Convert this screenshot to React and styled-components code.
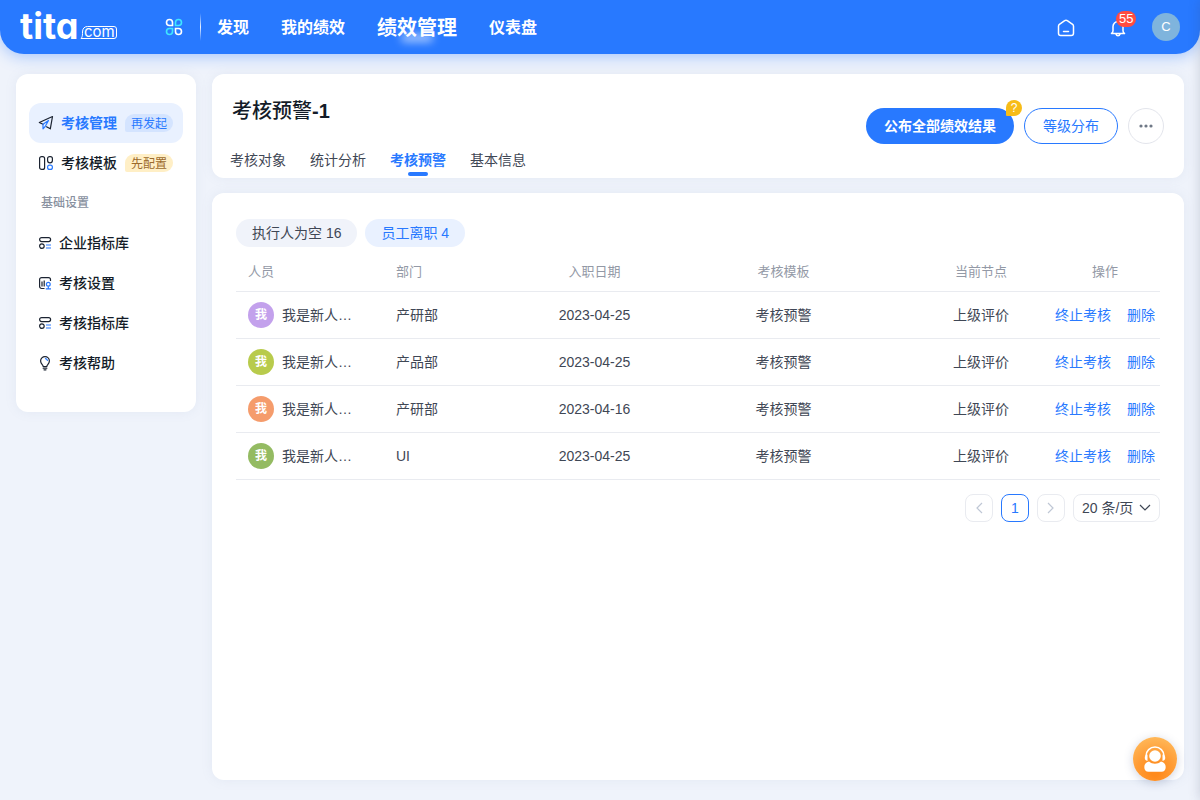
import React from "react";
import styled, { createGlobalStyle, css } from "styled-components";

const BLUE = "#2879ff";

const GlobalStyle = createGlobalStyle`
  *, *::before, *::after { box-sizing: border-box; }
  body {
    margin: 0;
    background: #eff3fb;
    color: #3f4755;
    font: 400 14px/20px "Liberation Sans", "Noto Sans CJK SC", sans-serif;
  }
  button, select { font: inherit; color: inherit; }
  button { cursor: pointer; padding: 0; border: 0; background: none; }
  a { color: inherit; text-decoration: none; }
  svg { display: block; flex: none; }
`;

const Page = styled.div`
  min-height: 100vh;
  display: flex;
  flex-direction: column;
`;

/* ---------- top bar ---------- */

const TopBar = styled.header`
  height: 54px;
  padding: 0 20px;
  display: flex;
  align-items: center;
  background: ${BLUE};
  border-radius: 0 0 24px 24px;
  box-shadow: 0 2px 16px rgba(40, 121, 255, 0.4);
  color: #fff;
`;

const LogoLink = styled.a`
  margin-right: 46px;
`;

const AppsButton = styled.button`
  margin-right: 17px;
`;

const Divider = styled.span`
  width: 1px;
  height: 28px;
  margin-right: 16px;
  background: linear-gradient(rgba(255, 255, 255, 0), rgba(255, 255, 255, 0.9), rgba(255, 255, 255, 0));
`;

const Nav = styled.nav`
  display: flex;
  align-items: center;
  gap: 32px;
  padding-top: 2px;
`;

const NavLink = styled.a`
  position: relative;
  font-size: 16px;
  line-height: 28px;
  font-weight: 700;
  ${(p) =>
    p.$active &&
    css`
      font-size: 20px;
      &::after {
        content: "";
        position: absolute;
        left: 24px;
        right: 24px;
        bottom: 0;
        height: 8px;
        border-radius: 4px;
        background: rgba(255, 255, 255, 0.6);
        filter: blur(4px);
      }
    `}
`;

const TopActions = styled.div`
  margin-left: auto;
  display: flex;
  align-items: center;
  gap: 24px;
`;

const IconButton = styled.button`
  position: relative;
  width: 28px;
  height: 28px;
  padding-top: 2px;
  display: grid;
  place-items: center;
`;

const Count = styled.span`
  position: absolute;
  top: -2px;
  left: 12px;
  padding: 0 3px;
  border-radius: 8px;
  background: #ff4c41;
  font-size: 13px;
  line-height: 16px;
`;

const UserButton = styled.button`
  width: 28px;
  height: 28px;
  margin-left: -4px;
  border-radius: 50%;
  background: #7fb4dd;
  color: #fff;
  font-size: 13px;
`;

/* ---------- body ---------- */

const Body = styled.div`
  flex: 1;
  display: flex;
  align-items: stretch;
  gap: 16px;
  padding: 20px 16px;
`;

const card = css`
  background: #fff;
  border-radius: 12px;
  box-shadow: 0 0 12px rgba(127, 145, 180, 0.1);
`;

const Sidebar = styled.aside`
  ${card}
  flex: none;
  align-self: flex-start;
  width: 180px;
  padding: 29px 13px;
`;

const SideLink = styled.a`
  height: 40px;
  padding: 0 9px;
  display: flex;
  align-items: center;
  gap: 7px;
  border-radius: 12px;
  color: ${(p) => (p.$active ? BLUE : "#141c28")};
  background: ${(p) => (p.$active ? "#e9f1ff" : "transparent")};
  font-weight: ${(p) => (p.$active ? 700 : 500)};
`;

const SideHeading = styled.h2`
  margin: 0;
  padding: 0 12px;
  font-size: 12px;
  line-height: 40px;
  font-weight: 500;
  color: #89919f;
`;

const Tag = styled.span`
  height: 18px;
  margin-left: 1px;
  padding: 0 6px;
  border-radius: 9px 9px 9px 2px;
  font-size: 12px;
  line-height: 20px;
  font-weight: 400;
  color: ${(p) => (p.$warm ? "#9c6a2c" : BLUE)};
  background: ${(p) => (p.$warm ? "#ffefc6" : "#d4e4ff")};
`;

const Main = styled.main`
  flex: 1;
  min-width: 0;
  display: flex;
  flex-direction: column;
  gap: 15px;
`;

const PlanHeader = styled.section`
  ${card}
  display: flex;
  justify-content: space-between;
  align-items: center;
  padding: 0 20px 0 18px;
`;

const PlanInfo = styled.div`
  padding-top: 23px;
`;

const Title = styled.h1`
  margin: 0 0 25px 2px;
  font-size: 20px;
  line-height: 28px;
  font-weight: 500;
  color: #141c28;
`;

const Tabs = styled.nav`
  display: flex;
  gap: 24px;
`;

const Tab = styled.a`
  position: relative;
  padding-bottom: 8px;
  ${(p) =>
    p.$active &&
    css`
      color: ${BLUE};
      font-weight: 700;
      &::after {
        content: "";
        position: absolute;
        left: 18px;
        right: 18px;
        bottom: 2px;
        height: 4px;
        border-radius: 2px;
        background: ${BLUE};
      }
    `}
`;

const PlanActions = styled.div`
  display: flex;
  gap: 10px;
`;

const PillButton = styled.button`
  position: relative;
  height: 36px;
  padding: 0 18px;
  border: ${(p) => (p.$primary ? "0" : `1px solid ${BLUE}`)};
  border-radius: 18px;
  color: ${(p) => (p.$primary ? "#fff" : BLUE)};
  background: ${(p) => (p.$primary ? BLUE : "#fff")};
  font-weight: ${(p) => (p.$primary ? 700 : 400)};
`;

const Hint = styled.span`
  position: absolute;
  top: -8px;
  right: -8px;
  width: 16px;
  height: 16px;
  border-radius: 8px 8px 8px 1px;
  background: #f7bc18;
  font-size: 12px;
  line-height: 16px;
  font-weight: 400;
`;

const MoreButton = styled.button`
  width: 36px;
  height: 36px;
  display: grid;
  place-items: center;
  border: 1px solid #e3e5ec;
  border-radius: 50%;
`;

const Content = styled.section`
  ${card}
  flex: 1;
  padding: 26px 24px;
`;

const Filters = styled.div`
  display: flex;
  gap: 8px;
  margin-bottom: 4px;
`;

const FilterPill = styled.button`
  height: 28px;
  padding: 0 16px;
  border-radius: 14px;
  color: ${(p) => (p.$active ? BLUE : "#3f4755")};
  background: ${(p) => (p.$active ? "#e9f1ff" : "#f0f3fa")};
`;

const Table = styled.table`
  width: 100%;
  table-layout: fixed;
  border-collapse: separate;
  border-spacing: 0;
`;

const HeadCell = styled.th`
  width: ${(p) => p.$width}px;
  height: 41px;
  padding: 2px ${(p) => (p.$left ? 12 : 0)}px 0;
  border-bottom: 1px solid #e9ebf0;
  text-align: ${(p) => (p.$left ? "left" : "center")};
  font-size: 13px;
  font-weight: 400;
  color: #9399a6;
`;

const Cell = styled.td`
  height: 47px;
  padding: 0 ${(p) => (p.$left ? 12 : 0)}px;
  border-bottom: 1px solid #e9ebf0;
  text-align: ${(p) => (p.$left ? "left" : "center")};
  white-space: nowrap;
`;

const Person = styled.div`
  display: flex;
  align-items: center;
  gap: 8px;
`;

const Avatar = styled.span`
  flex: none;
  width: 26px;
  border-radius: 50%;
  background: ${(p) => p.$color};
  color: #fff;
  font-size: 12px;
  line-height: 26px;
  font-weight: 700;
  text-align: center;
`;

const RowActions = styled.div`
  display: flex;
  justify-content: center;
  gap: 16px;
  color: ${BLUE};
`;

const Pagination = styled.nav`
  display: flex;
  justify-content: flex-end;
  gap: 8px;
  margin-top: 14px;
`;

const PageButton = styled.button`
  width: 28px;
  height: 28px;
  display: grid;
  place-items: center;
  border: 1px solid ${(p) => (p.$active ? BLUE : "#e9ebf0")};
  border-radius: 8px;
  color: ${(p) => (p.$active ? BLUE : "#bfc7d5")};
`;

const PageSize = styled.label`
  position: relative;
  svg {
    position: absolute;
    right: 9px;
    top: 10px;
    pointer-events: none;
  }
`;

const Select = styled.select`
  width: 87px;
  height: 28px;
  padding: 0 8px;
  border: 1px solid #e9ebf0;
  border-radius: 8px;
  background: #fff;
  appearance: none;
`;

const DrawerEdge = styled.div`
  position: fixed;
  top: 0;
  bottom: 0;
  left: 100%;
  width: 20px;
  box-shadow: 0 0 12px rgba(60, 70, 100, 0.22);
`;

const SupportButton = styled.button`
  position: fixed;
  right: 23px;
  bottom: 19px;
  width: 44px;
  height: 44px;
  display: grid;
  place-items: center;
  border-radius: 50%;
  background: radial-gradient(circle at 50% 80%, #ff8a1c 10%, #ff9c35 45%, #ffc266 100%);
  box-shadow: 0 2px 10px rgba(60, 80, 130, 0.25);
`;

/* ---------- drawings ---------- */

const LogoText = styled.text`
  font-family: Inter, sans-serif;
  font-feature-settings: "cv11" 1;
  font-size: ${(p) => p.$size}px;
  font-weight: ${(p) => p.$weight};
`;

const Logo = () => (
  <svg width="99" height="50" viewBox="0 0 99 50" fill="#fff" role="img" aria-label="tita.com">
    <LogoText x="0" y="37" $size={36} $weight={700}>tita</LogoText>
    <path d="M61 36.500c1-1 1.500-2.500 1.500-5v-1.500c0-3.500 2-5.500 5-5.500H94a2.500 2.500 0 0 1 2.500 2.500v7a2.500 2.500 0 0 1-2.500 2.500Z" fill="none" stroke="#fff" />
    <LogoText x="64" y="35" $size={15} $weight={400}>com</LogoText>
  </svg>
);

const AppsIcon = () => (
  <svg width="18" height="18" viewBox="0 0 18 18" fill="none" strokeWidth="1.600">
    <path d="M7.500 7.500H4.500a3 3 0 1 1 3-3Z" stroke="#fff" />
    <path d="M10.500 7.500V4.500a3 3 0 1 1 3 3Z" stroke="#3fe6ff" />
    <path d="M7.500 10.500V13.500a3 3 0 1 1-3-3Z" stroke="#3fe6ff" />
    <path d="M10.500 10.500H13.500a3 3 0 1 1-3 3Z" stroke="#fff" />
  </svg>
);

const HomeIcon = () => (
  <svg width="18" height="18" viewBox="0 0 18 18" fill="none" stroke="#fff" strokeWidth="1.500" strokeLinecap="round" strokeLinejoin="round">
    <path d="M1.500 7.200c0-.8.300-1.400.9-1.800L7.700 1.700c.8-.6 1.800-.6 2.600 0l5.300 3.700c.6.400.9 1 .9 1.800v7a2.300 2.300 0 0 1-2.300 2.300H3.800a2.300 2.300 0 0 1-2.300-2.300Z" />
    <path d="M6.500 12.500h5" />
  </svg>
);

const BellIcon = () => (
  <svg width="16" height="18" viewBox="0 0 16 18" fill="none" stroke="#fff" strokeWidth="1.500" strokeLinecap="round" strokeLinejoin="round">
    <path d="M1.500 14.500c1-.6 1.500-1.500 1.500-2.700V7.500a5 5 0 0 1 10 0v4.300c0 1.200.500 2.100 1.500 2.700Z" />
    <path d="M6 15c.3 1.200 1 1.700 2 1.700s1.700-.500 2-1.700" />
  </svg>
);

const PlaneIcon = () => (
  <svg width="16" height="16" viewBox="0 0 16 16" fill="none" stroke="#1b2331" strokeWidth="1.200" strokeLinejoin="round" strokeLinecap="round">
    <path d="M5 9.300 1.300 7.500 14.500 1.500 12.300 13.800 8.500 11.800" />
    <path d="M5 9.300v4.500l2.200-2.300M5 9.300l5.500-3.800-3.300 6" stroke={BLUE} />
  </svg>
);

const TemplateIcon = () => (
  <svg width="16" height="16" viewBox="0 0 16 16" fill="none" stroke="#1b2331" strokeWidth="1.200">
    <rect x="1.600" y="1.600" width="5" height="12.800" rx="2" />
    <path d="M9.600 3.600a2 2 0 0 1 2-2h.8a2 2 0 0 1 2 2V5.500a2.400 2.400 0 0 1-4.800 0Z" />
    <rect x="9.600" y="10.200" width="4.800" height="4.200" rx="2" stroke={BLUE} />
  </svg>
);

const LibraryIcon = () => (
  <svg width="14" height="14" viewBox="0 0 14 14" fill="none" stroke="#1b2331" strokeWidth="1.200">
    <rect x="1.600" y="1.600" width="11" height="4" rx="2" />
    <circle cx="3.900" cy="10.100" r="2.300" />
    <path d="M8 9h5M8 12h5" stroke={BLUE} />
  </svg>
);

const SettingsIcon = () => (
  <svg width="14" height="14" viewBox="0 0 14 14" fill="none" stroke="#1b2331" strokeWidth="1.200">
    <path d="M6.500 12.500H3.600a2 2 0 0 1-2-2V3.600a2 2 0 0 1 2-2H10.500a2 2 0 0 1 2 2V5" />
    <path d="M4 5.500v5M6.200 4.500v6" />
    <circle cx="10.300" cy="8.300" r="1.900" stroke={BLUE} />
    <path d="M10.300 10.200v2.300M7.800 12.800h5.200" stroke={BLUE} />
  </svg>
);

const BulbIcon = () => (
  <svg width="14" height="16" viewBox="0 0 14 16" fill="none" stroke="#1b2331" strokeWidth="1.200" strokeLinecap="round">
    <path d="M5.200 11.500c0-1.500-2.600-2.500-2.600-5.500a4.400 4.400 0 0 1 8.800 0c0 3-2.600 4-2.600 5.500ZM5.200 13.200h3.600M6 14.800h2" />
    <path d="M7.500 3.600c1.100.2 1.700.8 1.900 1.900" stroke={BLUE} />
  </svg>
);

const DotsIcon = () => (
  <svg width="16" height="4" viewBox="0 0 16 4" fill="#6f7886">
    <circle cx="3" cy="2" r="1.600" />
    <circle cx="8" cy="2" r="1.600" />
    <circle cx="13" cy="2" r="1.600" />
  </svg>
);

const Chevron = ({ d, width = 8, height = 12 }) => (
  <svg width={width} height={height} viewBox={`0 0 ${width} ${height}`} fill="none" stroke="currentColor" strokeWidth="1.200">
    <path d={d} />
  </svg>
);

const SupportIcon = () => (
  <svg width="24" height="28" viewBox="0 0 24 28" fill="#fff">
    <path d="M3 11a9 9 0 0 1 18 0" fill="none" stroke="#fff" strokeWidth="1.500" />
    <path d="M4.500 9.500v6.500a3.300 3.300 0 0 1 0-6.500ZM19.500 9.500v6.500a3.300 3.300 0 0 0 0-6.500Z" />
    <circle cx="12" cy="11" r="5.800" />
    <path d="M6 16.500c3.500 3 8.500 3 12 0 3 .8 4.700 2.700 4.700 5.500 0 3-1.500 4.700-4.200 4.700h-13c-2.700 0-4.200-1.700-4.200-4.700 0-2.800 1.700-4.700 4.700-5.500Z" />
  </svg>
);

/* ---------- data ---------- */

const settings = [
  { label: "企业指标库", Icon: LibraryIcon },
  { label: "考核设置", Icon: SettingsIcon },
  { label: "考核指标库", Icon: LibraryIcon },
  { label: "考核帮助", Icon: BulbIcon },
];

const columns = [
  { label: "人员", width: 148, left: true },
  { label: "部门", width: 150, left: true },
  { label: "入职日期", width: 121 },
  { label: "考核模板", width: 257 },
  { label: "当前节点", width: 138 },
  { label: "操作", width: 110 },
];

const rows = [
  { name: "我是新人…", color: "#c3a1ec", dept: "产研部", date: "2023-04-25" },
  { name: "我是新人…", color: "#b8cb4c", dept: "产品部", date: "2023-04-25" },
  { name: "我是新人…", color: "#f59c6c", dept: "产研部", date: "2023-04-16" },
  { name: "我是新人…", color: "#94bb62", dept: "UI", date: "2023-04-25" },
];

export default function App() {
  return (
    <Page>
      <GlobalStyle />
      <TopBar>
        <LogoLink href="#"><Logo /></LogoLink>
        <AppsButton aria-label="应用"><AppsIcon /></AppsButton>
        <Divider />
        <Nav>
          <NavLink href="#">发现</NavLink>
          <NavLink href="#">我的绩效</NavLink>
          <NavLink href="#" $active>绩效管理</NavLink>
          <NavLink href="#">仪表盘</NavLink>
        </Nav>
        <TopActions>
          <IconButton aria-label="首页"><HomeIcon /></IconButton>
          <IconButton aria-label="通知"><BellIcon /><Count>55</Count></IconButton>
          <UserButton>C</UserButton>
        </TopActions>
      </TopBar>

      <Body>
        <Sidebar>
          <SideLink href="#" $active><PlaneIcon />考核管理<Tag>再发起</Tag></SideLink>
          <SideLink href="#"><TemplateIcon />考核模板<Tag $warm>先配置</Tag></SideLink>
          <SideHeading>基础设置</SideHeading>
          {settings.map(({ label, Icon }) => (
            <SideLink href="#" key={label}><Icon />{label}</SideLink>
          ))}
        </Sidebar>

        <Main>
          <PlanHeader>
            <PlanInfo>
              <Title>考核预警<b>-1</b></Title>
              <Tabs>
                <Tab href="#">考核对象</Tab>
                <Tab href="#">统计分析</Tab>
                <Tab href="#" $active>考核预警</Tab>
                <Tab href="#">基本信息</Tab>
              </Tabs>
            </PlanInfo>
            <PlanActions>
              <PillButton $primary>公布全部绩效结果<Hint>?</Hint></PillButton>
              <PillButton>等级分布</PillButton>
              <MoreButton aria-label="更多"><DotsIcon /></MoreButton>
            </PlanActions>
          </PlanHeader>

          <Content>
            <Filters>
              <FilterPill>执行人为空 16</FilterPill>
              <FilterPill $active>员工离职 4</FilterPill>
            </Filters>
            <Table>
              <thead>
                <tr>
                  {columns.map((c) => (
                    <HeadCell key={c.label} scope="col" $width={c.width} $left={c.left}>{c.label}</HeadCell>
                  ))}
                </tr>
              </thead>
              <tbody>
                {rows.map((r, i) => (
                  <tr key={i}>
                    <Cell $left>
                      <Person><Avatar $color={r.color}>我</Avatar>{r.name}</Person>
                    </Cell>
                    <Cell $left>{r.dept}</Cell>
                    <Cell>{r.date}</Cell>
                    <Cell>考核预警</Cell>
                    <Cell>上级评价</Cell>
                    <Cell>
                      <RowActions><a href="#">终止考核</a><a href="#">删除</a></RowActions>
                    </Cell>
                  </tr>
                ))}
              </tbody>
            </Table>
            <Pagination aria-label="分页">
              <PageButton aria-label="上一页"><Chevron d="M7 1 2 6l5 5" /></PageButton>
              <PageButton $active>1</PageButton>
              <PageButton aria-label="下一页"><Chevron d="m1 1 5 5-5 5" /></PageButton>
              <PageSize>
                <Select aria-label="每页条数" defaultValue="20">
                  <option value="20">20 条/页</option>
                </Select>
                <Chevron d="m1 1 5 5 5-5" width={12} height={8} />
              </PageSize>
            </Pagination>
          </Content>
        </Main>
      </Body>
      <DrawerEdge />
      <SupportButton aria-label="在线客服"><SupportIcon /></SupportButton>
    </Page>
  );
}
